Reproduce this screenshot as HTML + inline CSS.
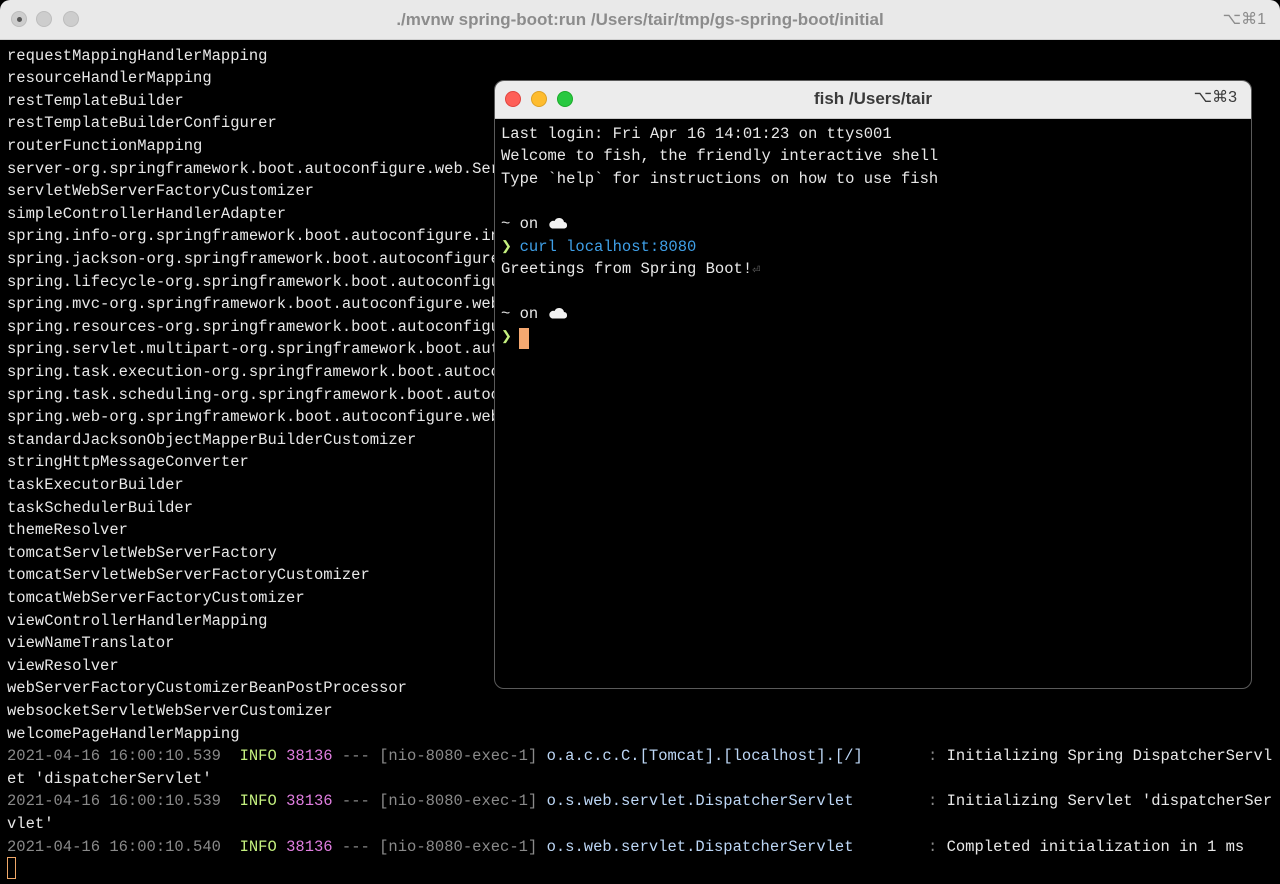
<!DOCTYPE html>
<html><head><meta charset="utf-8"><style>
*{margin:0;padding:0;box-sizing:border-box}
body{width:1280px;height:882px;background:#000;overflow:hidden;position:relative;font-family:"Liberation Mono",monospace;font-size:15.5px;color:#e8e8e8}
.tb{position:absolute;left:0;top:0;width:1280px;height:40px;background:#e9e9e9;border-bottom:1px solid #cfcfcf;border-radius:10px 10px 0 0}
.tt{position:absolute;top:0;height:40px;line-height:40px;font-family:"Liberation Sans",sans-serif;font-weight:bold;font-size:17px;color:#8c8c8c}
.d{position:absolute;width:16px;height:16px;border-radius:50%;top:11px;background:#cdcdcd;border:1px solid #bdbdbd}
.ls{position:absolute;left:0;top:1.5px;width:1280px;height:882px}
.l{position:absolute;left:7px;white-space:pre;line-height:22.6px;height:22.6px}
.win{position:absolute;left:494px;top:80px;width:758px;height:609px;background:#000;border:1px solid #5a5a5a;border-radius:10px;overflow:hidden}
.wtb{position:absolute;left:0;top:0;width:100%;height:38px;background:#ececec;border-bottom:1px solid #c8c8c8}
.wd{position:absolute;width:16px;height:16px;border-radius:50%;top:10px}
.il{position:absolute;left:6px;white-space:pre;line-height:22.6px}
.g{color:#8a8a8a}.gr{color:#c4f07f}.m{color:#e07ee0}.c{color:#bcd6f5}
.cl{display:inline-block;vertical-align:-1px}
.pr{display:inline-block;width:9.3px;overflow:hidden;color:#c4f07f;font-size:13px;vertical-align:top}
</style></head><body>
<div class="tb">
<div class="d" style="left:11px"><div style="width:5px;height:5px;background:#555;border-radius:50%;margin:4.5px"></div></div>
<div class="d" style="left:36px"></div><div class="d" style="left:63px"></div>
<div class="tt" style="left:0;width:1280px;text-align:center">./mvnw spring-boot:run /Users/tair/tmp/gs-spring-boot/initial</div>
<div class="tt" style="right:14px;font-weight:normal;font-size:16px">⌥⌘1</div>
</div>
<div class="ls">
<div class="l" style="top:43px">requestMappingHandlerMapping</div>
<div class="l" style="top:65.6px">resourceHandlerMapping</div>
<div class="l" style="top:88.2px">restTemplateBuilder</div>
<div class="l" style="top:110.8px">restTemplateBuilderConfigurer</div>
<div class="l" style="top:133.4px">routerFunctionMapping</div>
<div class="l" style="top:156px">server-org.springframework.boot.autoconfigure.web.ServerProperties</div>
<div class="l" style="top:178.6px">servletWebServerFactoryCustomizer</div>
<div class="l" style="top:201.2px">simpleControllerHandlerAdapter</div>
<div class="l" style="top:223.8px">spring.info-org.springframework.boot.autoconfigure.info.ProjectInfoProperties</div>
<div class="l" style="top:246.4px">spring.jackson-org.springframework.boot.autoconfigure.jackson.JacksonProperties</div>
<div class="l" style="top:269px">spring.lifecycle-org.springframework.boot.autoconfigure.context.LifecycleProperties</div>
<div class="l" style="top:291.6px">spring.mvc-org.springframework.boot.autoconfigure.web.servlet.WebMvcProperties</div>
<div class="l" style="top:314.2px">spring.resources-org.springframework.boot.autoconfigure.web.ResourceProperties</div>
<div class="l" style="top:336.8px">spring.servlet.multipart-org.springframework.boot.autoconfigure.web.servlet</div>
<div class="l" style="top:359.4px">spring.task.execution-org.springframework.boot.autoconfigure.task</div>
<div class="l" style="top:382px">spring.task.scheduling-org.springframework.boot.autoconfigure.task</div>
<div class="l" style="top:404.6px">spring.web-org.springframework.boot.autoconfigure.web.WebProperties</div>
<div class="l" style="top:427.2px">standardJacksonObjectMapperBuilderCustomizer</div>
<div class="l" style="top:449.8px">stringHttpMessageConverter</div>
<div class="l" style="top:472.4px">taskExecutorBuilder</div>
<div class="l" style="top:495px">taskSchedulerBuilder</div>
<div class="l" style="top:517.6px">themeResolver</div>
<div class="l" style="top:540.2px">tomcatServletWebServerFactory</div>
<div class="l" style="top:562.8px">tomcatServletWebServerFactoryCustomizer</div>
<div class="l" style="top:585.4px">tomcatWebServerFactoryCustomizer</div>
<div class="l" style="top:608px">viewControllerHandlerMapping</div>
<div class="l" style="top:630.6px">viewNameTranslator</div>
<div class="l" style="top:653.2px">viewResolver</div>
<div class="l" style="top:675.8px">webServerFactoryCustomizerBeanPostProcessor</div>
<div class="l" style="top:698.4px">websocketServletWebServerCustomizer</div>
<div class="l" style="top:721px">welcomePageHandlerMapping</div>
<div class="l" style="top:743.6px"><span class="g">2021-04-16 16:00:10.539 </span> <span class="gr">INFO</span> <span class="m">38136</span> <span class="g">--- [nio-8080-exec-1]</span> <span class="c">o.a.c.c.C.[Tomcat].[localhost].[/]</span>       <span class="g">:</span> Initializing Spring DispatcherServl</div>
<div class="l" style="top:766.2px">et 'dispatcherServlet'</div>
<div class="l" style="top:788.8px"><span class="g">2021-04-16 16:00:10.539 </span> <span class="gr">INFO</span> <span class="m">38136</span> <span class="g">--- [nio-8080-exec-1]</span> <span class="c">o.s.web.servlet.DispatcherServlet</span>        <span class="g">:</span> Initializing Servlet 'dispatcherSer</div>
<div class="l" style="top:811.4px">vlet'</div>
<div class="l" style="top:834px"><span class="g">2021-04-16 16:00:10.540 </span> <span class="gr">INFO</span> <span class="m">38136</span> <span class="g">--- [nio-8080-exec-1]</span> <span class="c">o.s.web.servlet.DispatcherServlet</span>        <span class="g">:</span> Completed initialization in 1 ms</div>
</div>
<div style="position:absolute;left:7px;top:857px;width:9px;height:22px;border:1.5px solid #f0a868"></div>

<div class="win">
<div class="wtb">
<div class="wd" style="left:10px;background:#fe5f57;border:1px solid #e0443e"></div>
<div class="wd" style="left:36px;background:#febc2e;border:1px solid #dea123"></div>
<div class="wd" style="left:62px;background:#28c840;border:1px solid #1aab29"></div>
<div style="position:absolute;left:0;width:100%;top:0;line-height:36px;text-align:center;font-family:'Liberation Sans',sans-serif;font-weight:bold;font-size:17px;color:#3a3a3a">fish /Users/tair</div>
<div style="position:absolute;right:14px;top:0;line-height:34px;font-family:'Liberation Sans',sans-serif;font-size:16px;color:#3a3a3a">⌥⌘3</div>
</div>
<div style="position:absolute;left:0;top:1.5px;width:100%;height:100%">
<div class="il" style="top:40px">Last login: Fri Apr 16 14:01:23 on ttys001</div>
<div class="il" style="top:62.6px">Welcome to fish, the friendly interactive shell</div>
<div class="il" style="top:85.2px">Type `help` for instructions on how to use fish</div>
<div class="il" style="top:130.4px">~ on <svg class="cl" width="20" height="13" viewBox="0 0 20 13"><path d="M4 12.5 H16.5 A3.3 3.3 0 0 0 16 6 A5 5 0 0 0 6.5 5 A3.8 3.8 0 0 0 4 12.5Z" fill="#f2f2f2"/></svg></div>
<div class="il" style="top:153px"><span class="pr">❯</span> <span style="color:#3fa0e8">curl localhost:8080</span></div>
<div class="il" style="top:175.6px">Greetings from Spring Boot!<span style="color:#666;font-size:10px">⏎</span></div>
<div class="il" style="top:220.8px">~ on <svg class="cl" width="20" height="13" viewBox="0 0 20 13"><path d="M4 12.5 H16.5 A3.3 3.3 0 0 0 16 6 A5 5 0 0 0 6.5 5 A3.8 3.8 0 0 0 4 12.5Z" fill="#f2f2f2"/></svg></div>
<div class="il" style="top:243.4px"><span class="pr">❯</span></div>
<div style="position:absolute;left:24px;top:245px;width:10px;height:21px;background:#f5a870"></div>
</div>
</div>
</body></html>
